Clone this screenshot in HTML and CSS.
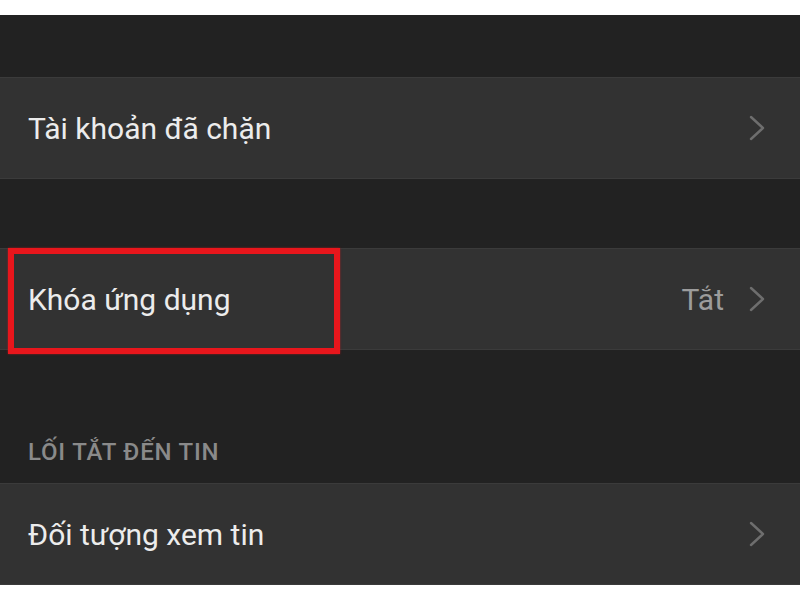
FILE: index.html
```html
<!DOCTYPE html>
<html lang="vi">
<head>
    <meta charset="UTF-8">
    <meta name="viewport" content="width=device-width, initial-scale=1.0">
    <title>Cài đặt quyền riêng tư</title>
    <link rel="stylesheet" href="styles.css">
</head>
<body>
    <div class="panel">
        <div class="gap gap-top"></div>

        <div class="row">
            <span class="label">Tài khoản đã chặn</span>
            <svg class="chevron" viewBox="0 0 16 26"><polyline points="2,2 14,13 2,24"/></svg>
        </div>

        <div class="gap gap-mid"></div>

        <div class="row">
            <span class="label">Khóa ứng dụng</span>
            <span class="value">Tắt</span>
            <svg class="chevron" viewBox="0 0 16 26"><polyline points="2,2 14,13 2,24"/></svg>
            <div class="highlight"></div>
        </div>

        <div class="section-title">LỐI TẮT ĐẾN TIN</div>

        <div class="row">
            <span class="label">Đối tượng xem tin</span>
            <svg class="chevron" viewBox="0 0 16 26"><polyline points="2,2 14,13 2,24"/></svg>
        </div>
    </div>
</body>
</html>
```

FILE: styles.css
```css
body {
    margin: 0;
    background: #ffffff;
    font-family: Roboto, "Noto Sans", sans-serif;
}

.panel {
    margin-top: 15px;
    height: 570px;
    background-color: #222222;
}

.gap-top {
    height: 62px;
}
.gap-mid {
    height: 69px;
}

.row {
    position: relative;
    display: flex;
    align-items: center;
    height: 102px;
    box-sizing: border-box;
    padding: 0 35px 0 28px;
    background-color: #323232;
    border-top: 1px solid #3b3b3b;
    border-bottom: 1px solid #3b3b3b;
}

.label {
    flex: 1;
    color: #ececec;
    font-size: 30px;
}

.value {
    color: #9c9c9c;
    font-size: 30px;
    margin-right: 25px;
}

.chevron {
    width: 16px;
    height: 26px;
    fill: none;
    stroke: #6e6e6e;
    stroke-width: 2.4;
    stroke-linecap: round;
    stroke-linejoin: round;
}

.section-title {
    height: 133px;
    box-sizing: border-box;
    display: flex;
    align-items: flex-end;
    padding: 0 0 17px 28px;
    color: #8a8a8a;
    font-size: 24px;
    font-weight: 500;
    letter-spacing: 0.8px;
}

.highlight {
    position: absolute;
    left: 8px;
    top: -1px;
    width: 332px;
    height: 106px;
    box-sizing: border-box;
    border: 6px solid #e8161c;
    box-shadow: 0 0 2px rgba(232, 22, 28, 0.6);
}
```
